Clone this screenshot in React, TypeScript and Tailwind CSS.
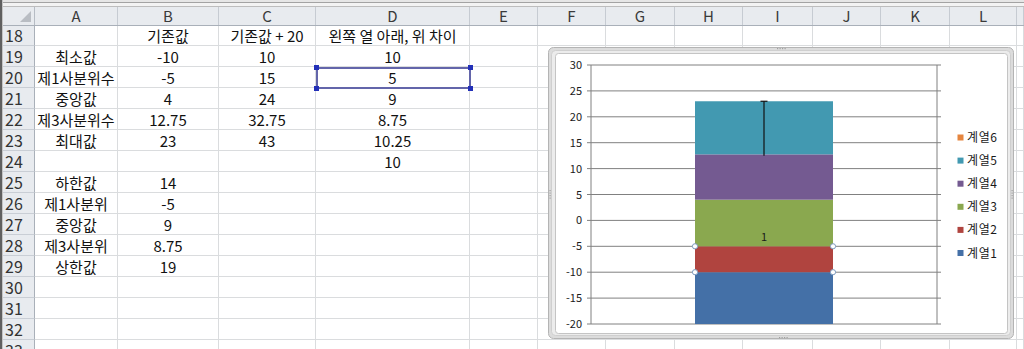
const colW = [
  'w-[83px]', 'w-[101px]', 'w-[97px]', 'w-[154px]', 'w-[68px]', 'w-[68px]',
  'w-[69px]', 'w-[68px]', 'w-[70px]', 'w-[68px]', 'w-[69px]', 'w-[67px]', 'w-[7px]',
]
const letters = ['A', 'B', 'C', 'D', 'E', 'F', 'G', 'H', 'I', 'J', 'K', 'L', '']

const rows: [number, string[]][] = [
  [18, ['', '기존값', '기존값 + 20', '왼쪽 열 아래, 위 차이']],
  [19, ['최소값', '-10', '10', '10']],
  [20, ['제1사분위수', '-5', '15', '5']],
  [21, ['중앙값', '4', '24', '9']],
  [22, ['제3사분위수', '12.75', '32.75', '8.75']],
  [23, ['최대값', '23', '43', '10.25']],
  [24, ['', '', '', '10']],
  [25, ['하한값', '14']],
  [26, ['제1사분위', '-5']],
  [27, ['중앙값', '9']],
  [28, ['제3사분위', '8.75']],
  [29, ['상한값', '19']],
  [30, []],
  [31, []],
  [32, []],
  [33, []],
]

// chart scale: 30 -> y65, -20 -> y324
const yOf = (v: number) => 65 + (30 - v) * 5.18

const segments = [
  { from: -20, to: -10, color: '#4470a7' },
  { from: -10, to: -5, color: '#b0443f' },
  { from: -5, to: 4, color: '#8aa84f' },
  { from: 4, to: 12.75, color: '#745a91' },
  { from: 12.75, to: 23, color: '#4299b1' },
]

const legend = [
  { name: '계열6', color: '#e5853f' },
  { name: '계열5', color: '#4299b1' },
  { name: '계열4', color: '#745a91' },
  { name: '계열3', color: '#8aa84f' },
  { name: '계열2', color: '#b0443f' },
  { name: '계열1', color: '#4470a7' },
]

function Chart() {
  const ticks = [30, 25, 20, 15, 10, 5, 0, -5, -10, -15, -20]
  const font = 'Noto Sans CJK KR, Noto Sans, sans-serif'
  return (
    <div className="absolute left-[548px] top-[47px] w-[466px] h-[292px]">
      <svg width="466" height="292" viewBox="548 47 466 292">
        <rect x="548.5" y="47.5" width="465" height="291" rx="5" fill="#dcdcdc" stroke="#b4b4b4" />
        <rect x="551.5" y="50.5" width="459" height="285" rx="4" fill="#ececec" stroke="#cfcfcf" />
        <rect x="555.5" y="53.5" width="452" height="280" rx="3" fill="#ffffff" stroke="#c4c4c4" />

        {/* frame handles */}
        {[0, 1, 2, 3].map((i) => (
          <g key={i} fill="#a0a0a0">
            <rect x={777 + i * 2.5} y="48" width="1.2" height="1.2" />
            <rect x={779 + i * 2.5} y="337" width="1.2" height="1.2" />
            <rect x="549.5" y={190 + i * 2.5} width="1.2" height="1.2" />
            <rect x="1011.5" y={190 + i * 2.5} width="1.2" height="1.2" />
          </g>
        ))}

        {ticks.map((v) => (
          <g key={v}>
            <line x1="587" x2="941" y1={yOf(v)} y2={yOf(v)} stroke="#808080" strokeWidth="1" />
            <text x="582" y={yOf(v) + 4} textAnchor="end" fontSize="11" fill="#1a1a1a" fontFamily={font}>
              {v}
            </text>
          </g>
        ))}
        <line x1="591" x2="591" y1="65" y2="324" stroke="#808080" />
        <line x1="937" x2="937" y1="65" y2="324" stroke="#808080" />

        {segments.map((s) => (
          <rect key={s.from} x="695" width="138" y={yOf(s.to)} height={yOf(s.from) - yOf(s.to)} fill={s.color} />
        ))}

        <line x1="764" x2="764" y1={yOf(23)} y2={yOf(12.5)} stroke="#111" strokeWidth="1.2" />
        <line x1="760.5" x2="767.5" y1={yOf(23)} y2={yOf(23)} stroke="#111" strokeWidth="1.2" />

        <text x="764" y="241" textAnchor="middle" fontSize="11" fill="#1a1a1a" fontFamily={font}>1</text>

        {[695, 833].map((x) => (
          <g key={x} fill="#ffffff" stroke="#7f9cbf" strokeWidth="1">
            <circle cx={x} cy={yOf(-5)} r="2.6" />
            <circle cx={x} cy={yOf(-10)} r="2.6" />
          </g>
        ))}

        {legend.map((l, i) => (
          <g key={l.name}>
            <rect x="957.5" y={134.5 + i * 23.1} width="6" height="6" fill={l.color} />
            <text x="967" y={142 + i * 23.1} fontSize="12" letterSpacing="0.6" fill="#1a1a1a" fontFamily={font}>
              {l.name}
            </text>
          </g>
        ))}
      </svg>
    </div>
  )
}

export default function App() {
  return (
    <div className="relative w-[1024px] h-[349px] overflow-hidden bg-white flex font-['Noto_Sans_CJK_KR','Noto_Sans',sans-serif] text-[#111]">
      <div className="w-[3px] shrink-0 flex">
        <div className="w-[2px] bg-[#606060]" />
        <div className="w-[1px] bg-[#c4c4c4]" />
      </div>

      <div className="flex-1 flex flex-col">
        <div className="h-[2px] shrink-0 bg-[#e6e6e6]" />
        <div className="h-[1px] shrink-0 bg-[#a3a3a3]" />
        <div className="h-[3px] shrink-0 bg-[#f3f3f3]" />
        <div className="h-[1px] shrink-0 bg-[#bdbdbd]" />

        <div className="h-[19px] shrink-0 flex bg-[#e8ebef] border-b border-[#a9b0b9]">
          <div className="w-[32px] shrink-0 border-r border-[#b6bcc4] relative">
            <div className="absolute right-[3px] bottom-[3px] w-0 h-0 border-l-[11px] border-l-transparent border-b-[11px] border-b-[#b9bdc3]" />
          </div>
          {letters.map((l, i) => (
            <div
              key={i}
              className={`${colW[i]} shrink-0 border-r border-[#c6cbd2] flex items-center justify-center text-[15px] text-[#3a3a3a] leading-[18px]`}
            >
              {l}
            </div>
          ))}
        </div>

        {rows.map(([n, cells]) => (
          <div key={n} className={`${n === 18 ? 'h-[20px]' : 'h-[21px]'} shrink-0 flex`}>
            <div className="w-[32px] shrink-0 bg-[#e8ebef] border-r border-b border-r-[#a9b0b9] border-b-[#c9ced5] flex items-center pl-[2px] text-[16px] text-[#333] leading-[19px]">
              {n}
            </div>
            {colW.map((w, i) => (
              <div
                key={i}
                className={`${w} shrink-0 border-r border-b border-[#dadcde] flex items-center justify-center text-[15px] leading-[19px] whitespace-nowrap`}
              >
                {cells[i] ?? ''}
              </div>
            ))}
          </div>
        ))}
      </div>

      {/* selected cell D20 */}
      <div className="absolute left-[316px] top-[67px] w-[155px] h-[22px] border-2 border-[#6365aa]" />
      <div className="absolute left-[314px] top-[65px] w-[5px] h-[5px] bg-[#2330b8]" />
      <div className="absolute left-[468px] top-[65px] w-[5px] h-[5px] bg-[#2330b8]" />
      <div className="absolute left-[314px] top-[86px] w-[5px] h-[5px] bg-[#2330b8]" />
      <div className="absolute left-[468px] top-[86px] w-[5px] h-[5px] bg-[#2330b8]" />

      <Chart />
    </div>
  )
}
